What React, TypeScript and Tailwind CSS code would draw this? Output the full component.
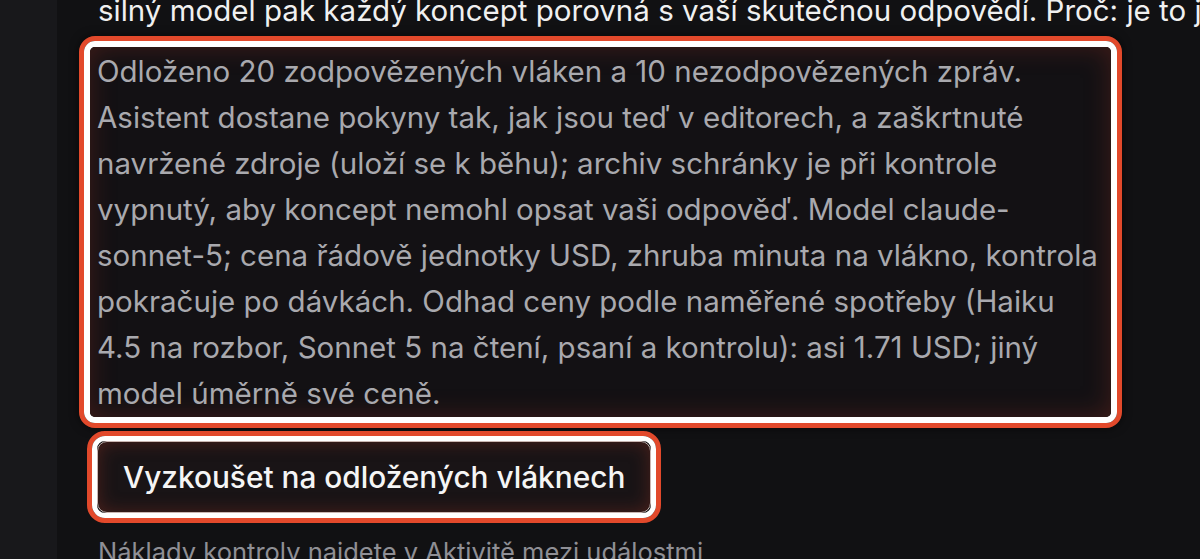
import React from "react";

const FONT = { fontFamily: "Inter, 'Noto Sans', sans-serif" };

export default function App() {
  return (
    <div className="flex h-[559px] w-[1200px] overflow-hidden bg-[#111113]" style={FONT}>
      <aside className="w-[57px] shrink-0 bg-[#18181b]" />
      <main className="flex min-w-0 flex-1 flex-col pl-[22px]">
        <p className="-mt-[13px] whitespace-nowrap pl-[19px] text-[29.5px] leading-[46px] text-[#f0f0f0]">
          silný model pak každý koncept porovná s vaší skutečnou odpovědí. Proč: je to jen
        </p>

        {/* highlighted summary */}
        <div className="mt-[3px] w-[1043px] rounded-[16px] border-[5px] border-[#e2492b] shadow-[0_0_10px_rgba(0,0,0,0.6)]">
          <div className="rounded-[11px] border-[6px] border-white">
            <div className="rounded-[5px] bg-[#131114] pb-[1px] pl-[7px] pr-[4px] pt-[1px] text-[29.5px] leading-[46px] text-[#a9a9ae] shadow-[inset_0_0_26px_rgba(150,50,35,0.35)]">
              Odloženo 20 zodpovězených vláken a 10 nezodpovězených zpráv. Asistent dostane pokyny tak,
              jak jsou teď v editorech, a zaškrtnuté navržené zdroje (uloží se k běhu); archiv schránky je
              při kontrole vypnutý, aby koncept nemohl opsat vaši odpověď. Model claude-sonnet-5; cena
              řádově jednotky USD, zhruba minuta na vlákno, kontrola pokračuje po dávkách. Odhad ceny
              podle naměřené spotřeby (Haiku 4.5 na rozbor, Sonnet 5 na čtení, psaní a kontrolu): asi
              1.71 USD; jiný model úměrně své ceně.
            </div>
          </div>
        </div>

        {/* highlighted button */}
        <div className="ml-[8px] mt-[3px] self-start rounded-[18px] border-[5px] border-[#e2492b]">
          <div className="rounded-[13px] border-[5px] border-white">
            <button className="flex h-[72px] items-center whitespace-nowrap rounded-[10px] border border-[#c9b6b2] bg-[#191416] px-[25px] text-[29.8px] font-medium text-[#f5f5f5] shadow-[inset_0_0_18px_rgba(150,50,35,0.4)]">
              Vyzkoušet na odložených vláknech
            </button>
          </div>
        </div>

        <p className="mt-[11px] pl-[19px] text-[25.5px] leading-[36px] text-[#8f8f95]">
          Náklady kontroly najdete v Aktivitě mezi událostmi
        </p>
      </main>
    </div>
  );
}
